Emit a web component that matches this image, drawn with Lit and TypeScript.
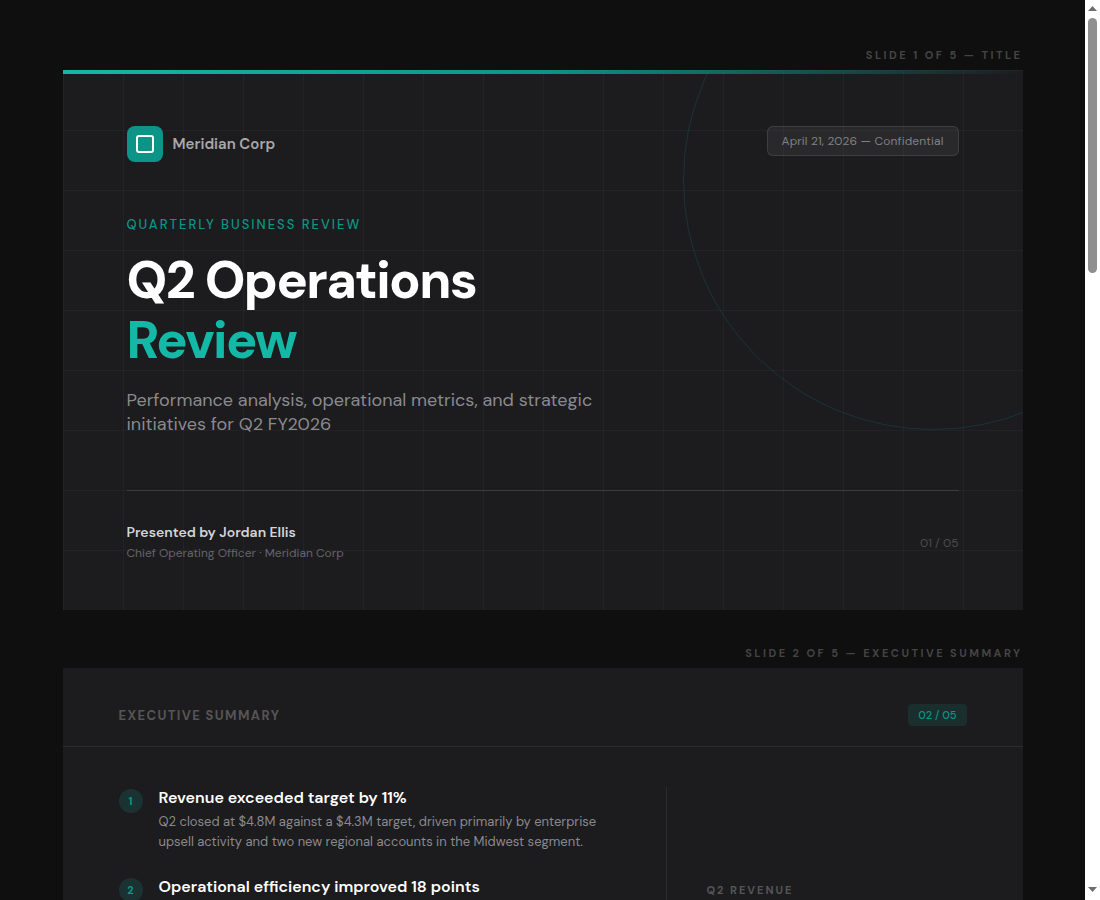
import { LitElement, html, css } from 'lit';
import { customElement } from 'lit/decorators.js';

const summary = [
  {
    title: 'Revenue exceeded target by 11%',
    text: 'Q2 closed at $4.8M against a $4.3M target, driven primarily by enterprise upsell activity and two new regional accounts in the Midwest segment.',
  },
  {
    title: 'Operational efficiency improved 18 points',
    text: 'Process automation in fulfillment reduced manual handling and shortened the average cycle time across all regions.',
  },
  {
    title: 'Customer retention held steady',
    text: 'Renewals stayed in line with plan, with expansion in the enterprise tier offsetting small account churn.',
  },
];

const stats = [
  { label: 'Q2 Revenue', value: '$4.8M' },
  { label: 'Efficiency', value: '+18 pts' },
];

const laterSlides = [
  { name: 'Operational Metrics', page: '03 / 05' },
  { name: 'Strategic Initiatives', page: '04 / 05' },
  { name: 'Next Steps', page: '05 / 05' },
];

@customElement('app-root')
export class AppRoot extends LitElement {
  static styles = css`
    :host {
      display: block;
      padding-right: 15px;
      background: #0f0f0f;
      font-family: 'DM Sans', Inter, 'Liberation Sans', sans-serif;
    }
    .page {
      width: 960px;
      margin: 0 auto;
      padding: 48px 0;
      display: flex;
      flex-direction: column;
      gap: 36px;
    }
    /* the window's scrollbar, painted over the right edge */
    .scrollbar {
      position: fixed;
      top: 0;
      right: 0;
      bottom: 0;
      width: 15px;
      background: #ffffff;
      display: flex;
      flex-direction: column;
      align-items: center;
      justify-content: space-between;
    }
    .scrollbar svg {
      display: block;
      fill: #6e6e6e;
    }
    .arrow-up {
      margin-top: 6px;
    }
    .arrow-down {
      margin-bottom: 8px;
    }
    .thumb {
      position: absolute;
      top: 18px;
      left: 3px;
      width: 9px;
      height: 255px;
      background: #8f8f8f;
      border-radius: 5px;
    }
    .label {
      height: 14px;
      line-height: 14px;
      margin-bottom: 8px;
      text-align: right;
      font-size: 11px;
      font-weight: 700;
      letter-spacing: 2.47px;
      text-transform: uppercase;
      color: #444444;
    }
    .slide {
      position: relative;
      height: 540px;
      overflow: hidden;
      background: #1c1c1e;
    }
    .title-slide {
      display: flex;
      flex-direction: column;
      box-sizing: border-box;
      padding: 56px 64px 0;
      background-color: #1c1c1e;
      background-image:
        linear-gradient(rgba(255, 255, 255, 0.03) 1px, transparent 1px),
        linear-gradient(90deg, rgba(255, 255, 255, 0.03) 1px, transparent 1px);
      background-size: 60px 60px;
    }
    .accent {
      position: absolute;
      top: 0;
      left: 0;
      right: 0;
      height: 4px;
      background: linear-gradient(90deg, #14b8a6 0%, #0d9488 50%, transparent 100%);
    }
    .ring {
      position: absolute;
      top: -140px;
      right: -160px;
      width: 500px;
      height: 500px;
      box-sizing: border-box;
      border: 1px solid rgba(20, 184, 166, 0.15);
      border-radius: 50%;
    }
    .top-row {
      display: flex;
      justify-content: space-between;
      align-items: flex-start;
    }
    .brand {
      display: flex;
      align-items: center;
      gap: 10px;
      font-size: 15px;
      font-weight: 600;
      color: #a8a8ac;
    }
    .logo {
      width: 36px;
      height: 36px;
      border-radius: 8px;
      background: #0d9488;
      display: flex;
      align-items: center;
      justify-content: center;
    }
    .logo span {
      width: 18px;
      height: 18px;
      box-sizing: border-box;
      border: 2px solid #ffffff;
      border-radius: 3px;
    }
    .date {
      padding: 6px 14px;
      font-size: 12px;
      line-height: 16px;
      letter-spacing: 0.01em;
      color: #808084;
      background: rgba(255, 255, 255, 0.06);
      border: 1px solid rgba(255, 255, 255, 0.1);
      border-radius: 6px;
    }
    .eyebrow {
      margin-top: 54px;
      font-size: 13px;
      line-height: 17px;
      font-weight: 500;
      letter-spacing: 2px;
      text-transform: uppercase;
      color: #0d9488;
    }
    h1 {
      margin: 17px 0 0;
      font-size: 52px;
      line-height: 60px;
      font-weight: 800;
      letter-spacing: -1.6px;
      color: #ffffff;
    }
    h1 span {
      display: block;
      color: #14b8a6;
    }
    .subtitle {
      margin: 18px 0 0;
      max-width: 480px;
      font-size: 18px;
      line-height: 24px;
      color: #8a8a8e;
    }
    .footer {
      margin-top: 54px;
      padding-top: 31px;
      border-top: 1px solid rgba(255, 255, 255, 0.12);
      display: flex;
      justify-content: space-between;
      align-items: center;
    }
    .presenter {
      font-size: 14px;
      line-height: 20px;
      font-weight: 600;
      color: #d4d4d8;
    }
    .role {
      margin-top: 1px;
      font-size: 12px;
      line-height: 20px;
      color: #656569;
    }
    .count {
      font-size: 12px;
      color: #4c4c4e;
    }
    .head {
      height: 79px;
      box-sizing: border-box;
      padding: 36px 56px 20px;
      border-bottom: 1px solid rgba(255, 255, 255, 0.07);
      display: flex;
      justify-content: space-between;
      align-items: center;
    }
    .head h2 {
      margin: 0;
      font-size: 13px;
      font-weight: 700;
      letter-spacing: 1.36px;
      text-transform: uppercase;
      color: #555555;
    }
    .badge {
      padding: 3px 10px;
      font-size: 11px;
      line-height: 16px;
      font-weight: 500;
      color: #0d9488;
      background: rgba(20, 184, 166, 0.12);
      border-radius: 4px;
    }
    .body {
      height: 461px;
      box-sizing: border-box;
      padding: 40px 56px;
      display: grid;
      grid-template-columns: 1fr 300px;
    }
    .items {
      display: flex;
      flex-direction: column;
      gap: 24px;
      padding-right: 40px;
      border-right: 1px solid rgba(255, 255, 255, 0.07);
    }
    .item {
      display: flex;
      gap: 16px;
    }
    .num {
      flex: none;
      margin-top: 2px;
      width: 24px;
      height: 24px;
      border-radius: 50%;
      display: flex;
      align-items: center;
      justify-content: center;
      font-size: 11px;
      font-weight: 700;
      color: #0d9488;
      background: rgba(20, 184, 166, 0.15);
    }
    .item h3 {
      margin: 0 0 4px;
      font-size: 16px;
      line-height: 21px;
      font-weight: 600;
      color: #ffffff;
    }
    .item p {
      margin: 0;
      font-size: 13px;
      line-height: 20px;
      color: #8a8a8e;
    }
    .stats {
      padding-left: 40px;
      display: flex;
      flex-direction: column;
      justify-content: center;
      gap: 34px;
    }
    .stat-label {
      font-size: 11px;
      line-height: 14px;
      font-weight: 700;
      letter-spacing: 0.18em;
      text-transform: uppercase;
      color: #555555;
    }
    .stat-value {
      margin-top: 8px;
      font-size: 52px;
      line-height: 56px;
      font-weight: 700;
      color: #ffffff;
    }
  `;

  render() {
    return html`
      <div class="page">
        <section>
          <div class="label">Slide 1 of 5 — Title</div>
          <div class="slide title-slide">
            <div class="accent"></div>
            <div class="ring"></div>
            <div class="top-row">
              <div class="brand">
                <div class="logo"><span></span></div>
                Meridian Corp
              </div>
              <div class="date">April 21, 2026 — Confidential</div>
            </div>
            <div class="eyebrow">Quarterly Business Review</div>
            <h1>Q2 Operations<span>Review</span></h1>
            <p class="subtitle">Performance analysis, operational metrics, and strategic initiatives for Q2 FY2026</p>
            <div class="footer">
              <div>
                <div class="presenter">Presented by Jordan Ellis</div>
                <div class="role">Chief Operating Officer · Meridian Corp</div>
              </div>
              <div class="count">01 / 05</div>
            </div>
          </div>
        </section>
        <section>
          <div class="label">Slide 2 of 5 — Executive Summary</div>
          <div class="slide">
            <div class="head">
              <h2>Executive Summary</h2>
              <div class="badge">02 / 05</div>
            </div>
            <div class="body">
              <div class="items">
                ${summary.map(
                  (item, i) => html`
                    <div class="item">
                      <div class="num">${i + 1}</div>
                      <div>
                        <h3>${item.title}</h3>
                        <p>${item.text}</p>
                      </div>
                    </div>
                  `
                )}
              </div>
              <div class="stats">
                ${stats.map(
                  (s) => html`
                    <div>
                      <div class="stat-label">${s.label}</div>
                      <div class="stat-value">${s.value}</div>
                    </div>
                  `
                )}
              </div>
            </div>
          </div>
        </section>
        ${laterSlides.map(
          (s, i) => html`
            <section>
              <div class="label">Slide ${i + 3} of 5 — ${s.name}</div>
              <div class="slide">
                <div class="head">
                  <h2>${s.name}</h2>
                  <div class="badge">${s.page}</div>
                </div>
              </div>
            </section>
          `
        )}
      </div>
      <div class="scrollbar">
        <svg class="arrow-up" width="9" height="5" viewBox="0 0 9 5"><path d="M4.5 0L9 5H0z"></path></svg>
        <div class="thumb"></div>
        <svg class="arrow-down" width="9" height="5" viewBox="0 0 9 5"><path d="M0 0H9L4.5 5z"></path></svg>
      </div>
    `;
  }
}
